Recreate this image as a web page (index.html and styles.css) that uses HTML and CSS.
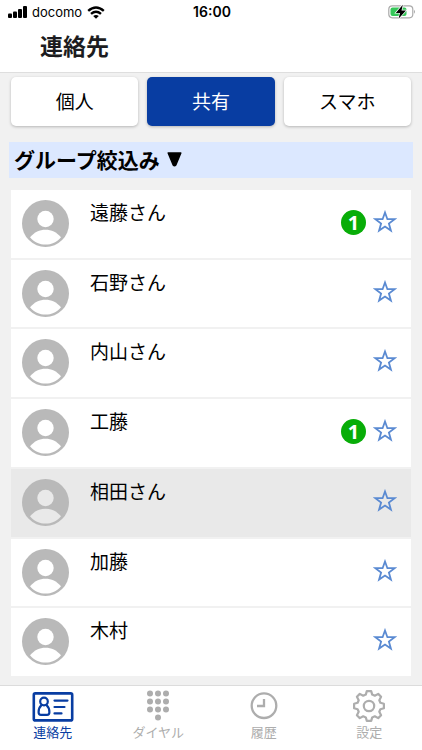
FILE: index.html
```html
<!DOCTYPE html>
<html lang="ja">
<head>
<meta charset="utf-8">
<meta name="viewport" content="width=device-width, initial-scale=1">
<title>連絡先</title>
<link rel="stylesheet" href="styles.css">
</head>
<body>
<svg class="defs" aria-hidden="true">
  <symbol id="avatar" viewBox="0 0 47 47">
    <circle cx="23.5" cy="23.5" r="23.5" fill="#b9b9b9"/>
    <circle cx="23.5" cy="19" r="8.2" fill="currentColor"/>
    <path d="M8 37.2C12.5 32 17.5 29.7 23.5 29.7S34.500 32 39 37.200C35 42 29.500 44.600 23.500 44.600S12 42 8 37.200Z" fill="currentColor"/>
  </symbol>
  <symbol id="star" viewBox="0 0 24 24">
    <path d="M12 2.500L14.400 9.200H21.600L15.900 13.500L17.900 20.600L12 16.500L6.100 20.600L8.100 13.500L2.400 9.200H9.600Z" fill="none" stroke="#5a8ad2" stroke-width="1.800"/>
  </symbol>
</svg>
<header class="header">
  <div class="status">
    <div class="status-left">
      <svg width="19" height="12" viewBox="0 0 19 12" aria-hidden="true"><rect y="7.500" width="4" height="4.500" rx="1"/><rect x="5" y="5.500" width="4" height="6.500" rx="1"/><rect x="10" y="3" width="4" height="9" rx="1"/><rect x="15" width="4" height="12" rx="1"/></svg>
      <span class="carrier">docomo</span>
      <svg width="18" height="13" viewBox="0 0 18 13" fill="none" stroke="#000" stroke-width="2.400" aria-hidden="true"><path d="M1.200 4.800Q9-2 16.800 4.800M4 7.900Q9 3.600 14 7.900"/><path d="M6.200 10Q9 7.800 11.800 10L9 12.800Z" fill="#000" stroke="none"/></svg>
    </div>
    <time class="clock">16:00</time>
    <svg class="battery" width="28" height="16" viewBox="0 0 28 16" aria-hidden="true"><rect x=".8" y="1.800" width="24" height="12" rx="3.500" fill="#fff" stroke="#aaa" stroke-width="1.200"/><rect x="2.500" y="3.500" width="16" height="8.600" rx="2" fill="#35c759"/><path d="M26 5.800Q28 7.800 26 9.800Z" fill="#aaa"/><path d="M14.800 .8L7.800 8.900H12L10.500 14.800L18 6.500H13.500Z" stroke="#fff" stroke-width="1.400" paint-order="stroke"/></svg>
  </div>
  <h1 class="title">連絡先</h1>
</header>
<main class="main">
  <div class="tabs">
    <button class="tab" type="button">個人</button>
    <button class="tab active" type="button" aria-pressed="true">共有</button>
    <button class="tab" type="button">スマホ</button>
  </div>
  <button class="filter" type="button">グループ絞込み
    <svg width="15" height="15" viewBox="0 0 15 15" aria-hidden="true"><path d="M1.200 1H13.800L8.800 13Q7.500 14.600 6.200 13Z" stroke="#000" stroke-width="1.500" stroke-linejoin="round"/></svg>
  </button>
  <ul class="list">
    <li class="row"><svg class="avatar" aria-hidden="true"><use href="#avatar"/></svg><span class="name">遠藤さん</span><span class="badge">1</span><button class="star" type="button" aria-label="お気に入り"><svg aria-hidden="true"><use href="#star"/></svg></button></li>
    <li class="row"><svg class="avatar" aria-hidden="true"><use href="#avatar"/></svg><span class="name">石野さん</span><button class="star" type="button" aria-label="お気に入り"><svg aria-hidden="true"><use href="#star"/></svg></button></li>
    <li class="row"><svg class="avatar" aria-hidden="true"><use href="#avatar"/></svg><span class="name">内山さん</span><button class="star" type="button" aria-label="お気に入り"><svg aria-hidden="true"><use href="#star"/></svg></button></li>
    <li class="row"><svg class="avatar" aria-hidden="true"><use href="#avatar"/></svg><span class="name">工藤</span><span class="badge">1</span><button class="star" type="button" aria-label="お気に入り"><svg aria-hidden="true"><use href="#star"/></svg></button></li>
    <li class="row selected"><svg class="avatar" aria-hidden="true"><use href="#avatar"/></svg><span class="name">相田さん</span><button class="star" type="button" aria-label="お気に入り"><svg aria-hidden="true"><use href="#star"/></svg></button></li>
    <li class="row"><svg class="avatar" aria-hidden="true"><use href="#avatar"/></svg><span class="name">加藤</span><button class="star" type="button" aria-label="お気に入り"><svg aria-hidden="true"><use href="#star"/></svg></button></li>
    <li class="row"><svg class="avatar" aria-hidden="true"><use href="#avatar"/></svg><span class="name">木村</span><button class="star" type="button" aria-label="お気に入り"><svg aria-hidden="true"><use href="#star"/></svg></button></li>
  </ul>
</main>
<nav class="nav">
  <a class="nav-item current" href="#contacts">
    <svg width="42" height="33" viewBox="0 0 42 33" fill="none" stroke="currentColor" stroke-width="2.200" stroke-linecap="round" aria-hidden="true"><rect x="1.800" y="3.400" width="38.400" height="27" rx="1.500" stroke-width="2.600"/><circle cx="12" cy="11.500" r="3.800"/><path d="M9.300 15.300C7.300 17 6.600 19.500 6.600 22.200Q6.600 24.800 9 24.800H15Q17.400 24.800 17.400 22.200C17.400 19.500 16.700 17 14.700 15.300M22.500 10.600H35.500M22.500 17H32.500M22.500 23.400H29.500"/></svg>
    <span>連絡先</span></a>
  <a class="nav-item" href="#dial">
    <svg width="24" height="33" viewBox="0 0 24 33" fill="currentColor" aria-hidden="true"><circle cx="4" cy="3.500" r="3"/><circle cx="12" cy="3.500" r="3"/><circle cx="20" cy="3.500" r="3"/><circle cx="4" cy="11.500" r="3"/><circle cx="12" cy="11.500" r="3"/><circle cx="20" cy="11.500" r="3"/><circle cx="4" cy="19.500" r="3"/><circle cx="12" cy="19.500" r="3"/><circle cx="20" cy="19.500" r="3"/><circle cx="12" cy="27.500" r="3"/></svg>
    <span>ダイヤル</span></a>
  <a class="nav-item" href="#history">
    <svg width="34" height="33" viewBox="0 0 34 33" fill="none" stroke="currentColor" stroke-width="2.300" aria-hidden="true"><circle cx="17" cy="15.700" r="12.300"/><path d="M17 9V16H10"/></svg>
    <span>履歴</span></a>
  <a class="nav-item" href="#settings">
    <svg width="34" height="33" viewBox="-17 -16 34 33" fill="none" stroke="currentColor" stroke-width="2.200" stroke-linejoin="round" aria-hidden="true"><circle r="5.200"/><path d="M-3.200-11.400L-2.200-14.900H2.200L3.200-11.400L5.800-10.300L9.200-12.100L12.100-9.200L10.300-5.800L11.400-3.200L14.900-2.200V2.200L11.400 3.200L10.300 5.800L12.100 9.200L9.200 12.100L5.800 10.300L3.200 11.400L2.200 14.900H-2.200L-3.200 11.400L-5.800 10.300L-9.200 12.100L-12.100 9.200L-10.300 5.800L-11.400 3.200L-14.900 2.200V-2.200L-11.400-3.200L-10.300-5.800L-12.100-9.200L-9.200-12.100L-5.800-10.300Z"/></svg>
    <span>設定</span></a>
</nav>
</body>
</html>
```
FILE: styles.css
```css
* { box-sizing: border-box; }
body {
  margin: 0;
  min-height: 100vh;
  display: flex;
  flex-direction: column;
  background: #f1f1f1;
  color: #000;
  font-family: "Noto Sans CJK JP", sans-serif;
}
button { border: 0; padding: 0; font: inherit; color: inherit; cursor: pointer; }
svg { display: block; flex: none; }
.defs { position: absolute; width: 0; height: 0; }

.header {
  background: #fff;
  border-bottom: 1px solid #dedede;
}
.status {
  display: grid;
  grid-template-columns: 1fr auto 1fr;
  align-items: center;
  height: 24px;
  padding: 0 6px 0 8px;
  font: 14px/20px Inter, sans-serif;
}
.status-left { display: flex; align-items: center; gap: 5px; }
.carrier { font-size: 13px; }
.clock { font-weight: 600; }
.battery { justify-self: end; }
.title {
  margin: 0;
  padding: 3px 40px 9px;
  font-size: 23px;
  line-height: 36px;
  font-weight: 700;
  color: #1c1c20;
}

.main {
  flex: 1;
  display: flex;
  flex-direction: column;
  padding: 4px 9px 9px;
}
.tabs {
  display: grid;
  grid-template-columns: repeat(3, 1fr);
  gap: 9px;
  padding: 0 2px;
}
.tab {
  height: 49px;
  padding-bottom: 2px;
  border-radius: 5px;
  background: #fff;
  box-shadow: 0 1px 3px rgba(0, 0, 0, .25);
  font-size: 19px;
}
.tab.active { background: #083da2; color: #fff; }
.filter {
  display: flex;
  align-items: center;
  gap: 7px;
  height: 36px;
  margin: 16px 0 12px;
  padding: 0 5px 2px;
  background: #dce8ff;
  font-size: 21px;
  font-weight: 700;
}
.list {
  flex: 1;
  display: grid;
  grid-auto-rows: 1fr;
  gap: 2px;
  margin: 0;
  padding: 0 2px;
  list-style: none;
}
.row {
  display: flex;
  align-items: flex-start;
  min-height: 67px;
  padding: 10px 14px 10px 11px;
  background: #fff;
}
.row.selected { background: #e9e9e9; }
.avatar { width: 47px; height: 47px; color: #fff; }
.selected .avatar { color: #e9e9e9; }
.name {
  flex: 1;
  margin-left: 21px;
  font-size: 19px;
  line-height: 24px;
}
.badge {
  width: 25px;
  height: 25px;
  margin: 10px 7px 0 0;
  border-radius: 50%;
  background: #08ad08;
  color: #fff;
  font: 700 20px/25px "Noto Sans", sans-serif;
  text-align: center;
}
.star { margin-top: 10px; background: none; }
.star svg { width: 24px; height: 24px; }

.nav {
  display: grid;
  grid-template-columns: repeat(4, 1fr);
  height: 65px;
  padding-top: 4px;
  border-top: 1px solid #dcdcdc;
  background: #fff;
}
.nav-item {
  display: flex;
  flex-direction: column;
  align-items: center;
  color: #adadad;
  font-size: 13px;
  line-height: 18px;
  text-decoration: none;
}
.nav-item.current { color: #083da2; }
```
